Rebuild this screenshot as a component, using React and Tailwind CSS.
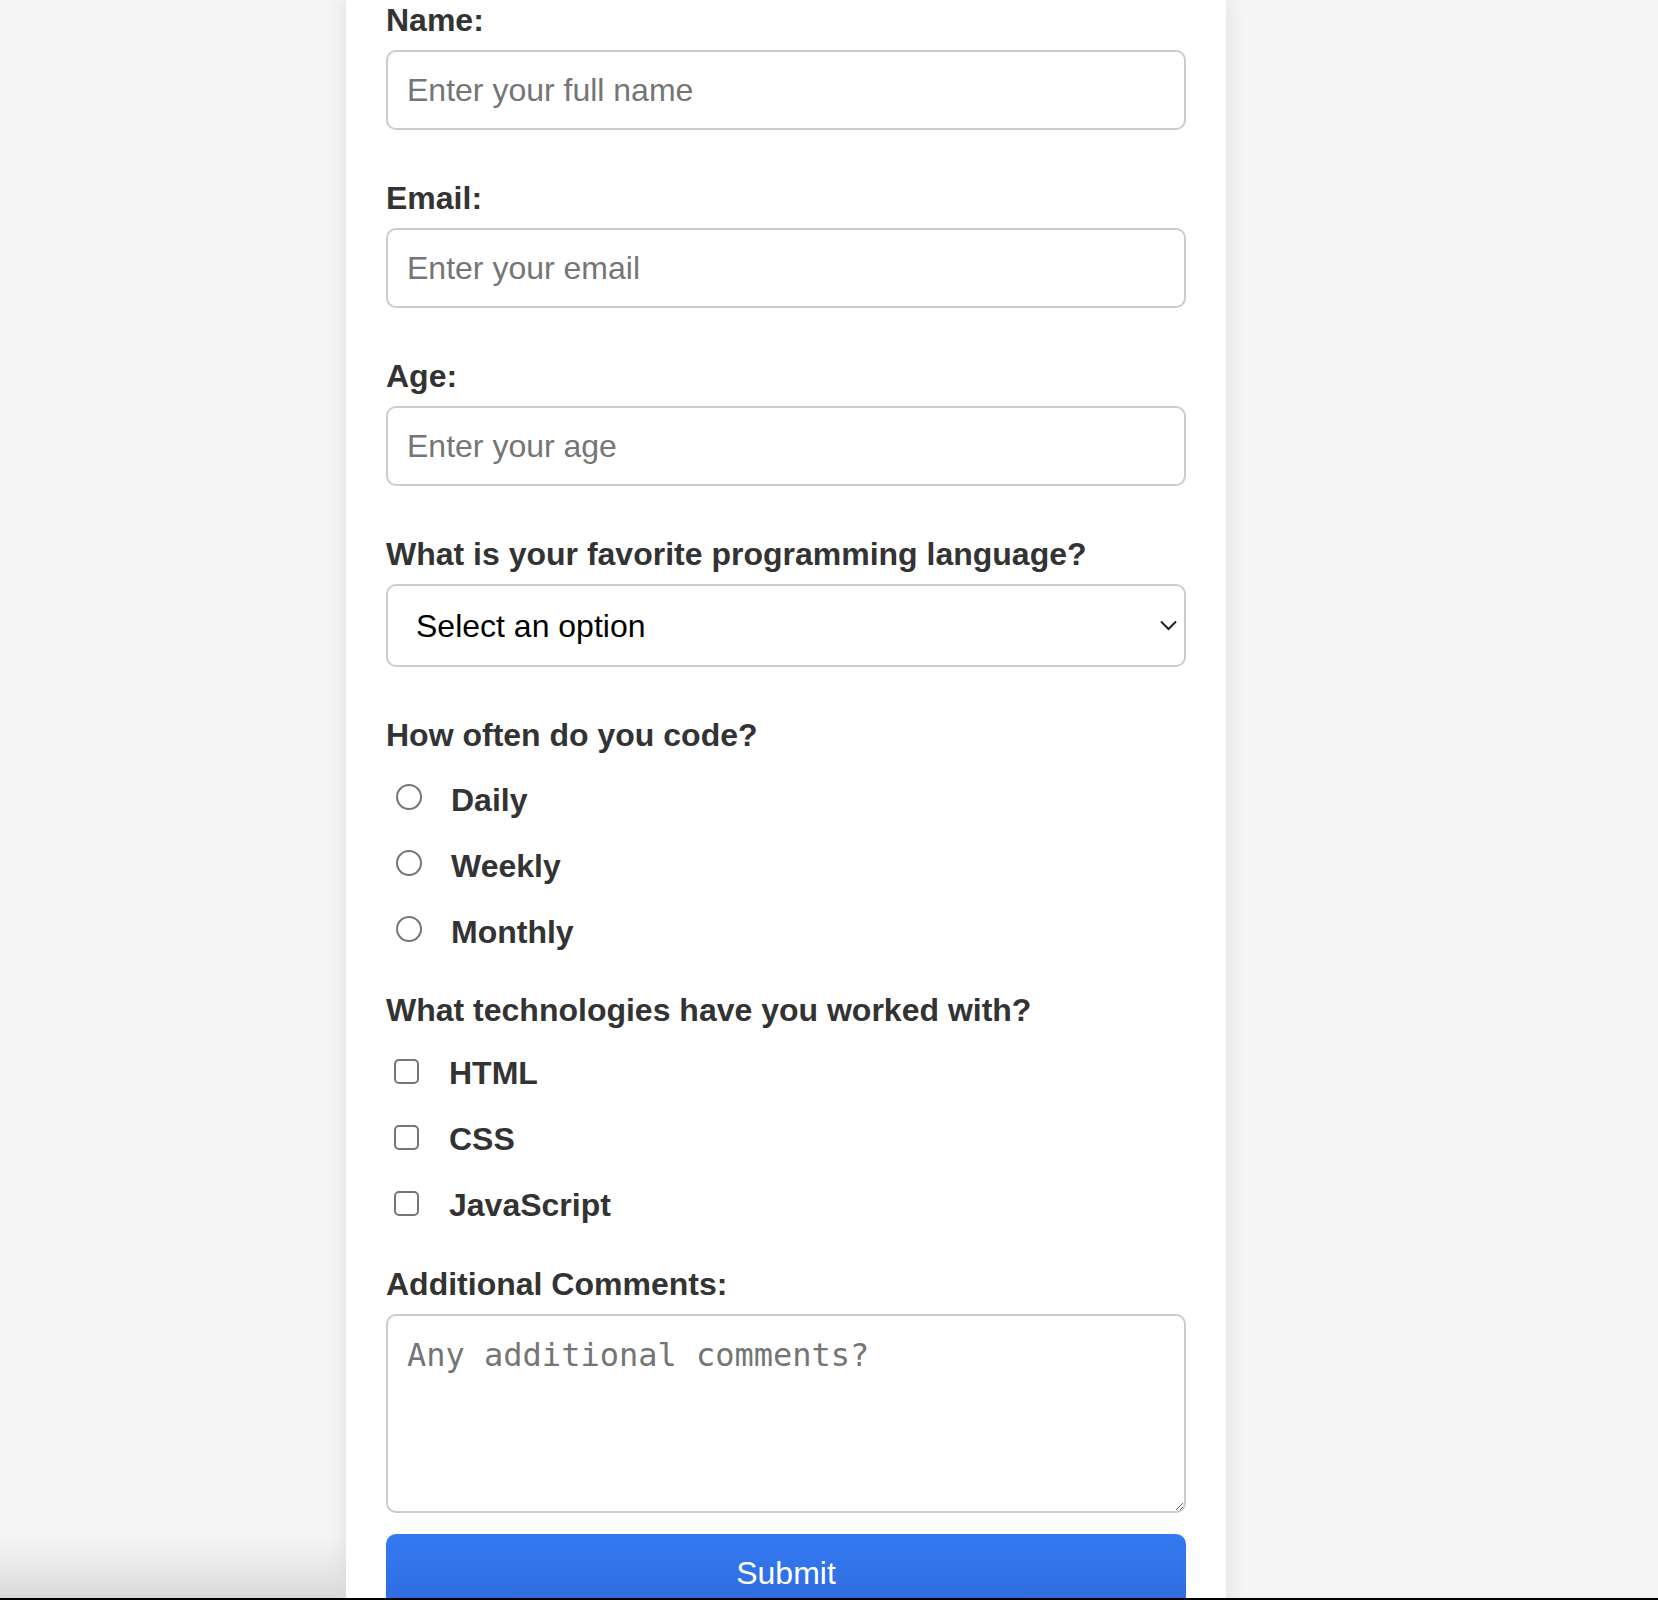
import React from 'react';

const labelCls = "block text-[32px] leading-[36px] font-bold text-[#333]";
const inputCls =
  "block w-full h-[80px] border-2 border-[#ccc] rounded-[10px] pl-[19px] pr-[20px] text-[32px] leading-[36px] text-black placeholder:text-[#757575] bg-white outline-none";

const TextField = ({ id, label, type = 'text', placeholder, last }) => (
  <div className={last ? '' : 'mb-[50px]'}>
    <label htmlFor={id} className={`${labelCls} mb-[12px]`}>{label}</label>
    <input id={id} type={type} placeholder={placeholder} className={inputCls} />
  </div>
);

const Radio = ({ name, value, label }) => (
  <label className="flex items-start h-[36px]">
    <input
      type="radio"
      name={name}
      value={value}
      className="appearance-none shrink-0 mt-[2px] ml-[10px] mr-[29px] w-[26px] h-[26px] rounded-full border-2 border-[#767676] bg-white"
    />
    <span className="text-[32px] leading-[36px] font-bold text-[#333]">{label}</span>
  </label>
);

const Check = ({ value, label }) => (
  <label className="flex items-start h-[36px]">
    <input
      type="checkbox"
      value={value}
      className="appearance-none shrink-0 mt-[4px] ml-[8px] mr-[30px] w-[25px] h-[25px] rounded-[5px] border-2 border-[#767676] bg-white"
    />
    <span className="text-[32px] leading-[36px] font-bold text-[#333]">{label}</span>
  </label>
);

export default function App() {
  return (
    <div className="relative h-[1600px] flex flex-col bg-[#f5f5f5] overflow-hidden font-['Liberation_Sans',Arial,sans-serif]">
      <div className="flex-1 min-h-0 overflow-hidden">
        <form
          onSubmit={(e) => e.preventDefault()}
          className="ml-[346px] w-[880px] bg-white px-[40px] pt-[2px] pb-[40px] shadow-[0_0_20px_rgba(0,0,0,0.1)]"
        >
          <TextField id="name" label="Name:" placeholder="Enter your full name" />
          <TextField id="email" label="Email:" type="email" placeholder="Enter your email" />
          <TextField id="age" label="Age:" type="number" placeholder="Enter your age" />

          <div className="mb-[50px]">
            <label htmlFor="lang" className={`${labelCls} mb-[12px]`}>
              What is your favorite programming language?
            </label>
            <div className="relative">
              <select
                id="lang"
                defaultValue=""
                className="block w-full h-[83px] appearance-none border-2 border-[#ccc] rounded-[10px] pl-[28px] pr-[40px] text-[32px] leading-[36px] text-black bg-white outline-none"
              >
                <option value="">Select an option</option>
                <option value="js">JavaScript</option>
                <option value="py">Python</option>
                <option value="java">Java</option>
              </select>
              <svg
                className="absolute right-[9px] top-[36px] pointer-events-none"
                width="17"
                height="11"
                viewBox="0 0 17 11"
                fill="none"
              >
                <path d="M1 1.5 L8.5 9 L16 1.5" stroke="#222" strokeWidth="2" />
              </svg>
            </div>
          </div>

          <div className={labelCls}>How often do you code?</div>
          <div className="mt-[29px] flex flex-col gap-[30px]">
            <Radio name="freq" value="daily" label="Daily" />
            <Radio name="freq" value="weekly" label="Weekly" />
            <Radio name="freq" value="monthly" label="Monthly" />
          </div>

          <div className={`${labelCls} mt-[42px]`}>What technologies have you worked with?</div>
          <div className="mt-[27px] flex flex-col gap-[30px]">
            <Check value="html" label="HTML" />
            <Check value="css" label="CSS" />
            <Check value="js" label="JavaScript" />
          </div>

          <div className="mt-[43px]">
            <label htmlFor="comments" className={`${labelCls} mb-[12px]`}>Additional Comments:</label>
            <textarea
              id="comments"
              placeholder="Any additional comments?"
              className="block w-full h-[199px] border-2 border-[#ccc] rounded-[10px] px-[19px] pt-[21px] pb-[20px] text-[32px] leading-[36px] font-['DejaVu_Sans_Mono',monospace] text-black placeholder:text-[#757575] bg-white outline-none"
            />
          </div>

          <button
            type="submit"
            className="mt-[21px] block w-full h-[78px] rounded-[10px] bg-linear-to-b from-[#3579f2] to-[#2e6bdc] text-white text-[32px] leading-[36px]"
          >
            Submit
          </button>
        </form>
      </div>
      <div className="h-[2px] bg-black shrink-0" />
      <div className="absolute left-0 bottom-[2px] w-[346px] h-[60px] bg-linear-to-b from-transparent to-[#dadada] pointer-events-none" />
    </div>
  );
}
